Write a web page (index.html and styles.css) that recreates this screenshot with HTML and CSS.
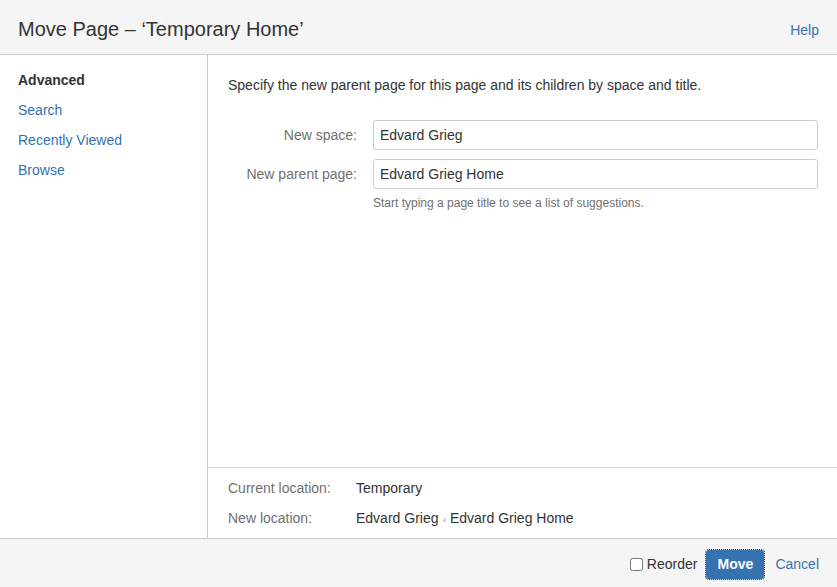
FILE: index.html
```html
<!DOCTYPE html>
<html lang="en">
<head>
  <meta charset="UTF-8">
  <title>Move Page</title>
  <link rel="stylesheet" href="styles.css">
</head>
<body>
  <div class="dialog">
    <!-- Header -->
    <div class="dialog-header">
      <h2>Move Page – ‘Temporary Home’</h2>
      <a href="#" class="help">Help</a>
    </div>

    <div class="dialog-body">
      <!-- Sidebar -->
      <ul class="nav">
        <li class="selected">Advanced</li>
        <li><a href="#">Search</a></li>
        <li><a href="#">Recently Viewed</a></li>
        <li><a href="#">Browse</a></li>
      </ul>

      <!-- Panel -->
      <div class="panel">
        <div class="panel-form">
          <p class="intro">Specify the new parent page for this page and its children by space and title.</p>
          <div class="field">
            <label for="space">New space:</label>
            <input type="text" id="space" value="Edvard Grieg">
          </div>
          <div class="field">
            <label for="parent">New parent page:</label>
            <input type="text" id="parent" value="Edvard Grieg Home">
          </div>
          <div class="hint">Start typing a page title to see a list of suggestions.</div>
        </div>
        <div class="locations">
          <div class="loc-row">
            <span class="loc-label">Current location:</span>
            <span>Temporary</span>
          </div>
          <div class="loc-row">
            <span class="loc-label">New location:</span>
            <span>Edvard Grieg <span class="sep">›</span> Edvard Grieg Home</span>
          </div>
        </div>
      </div>
    </div>

    <!-- Footer -->
    <div class="dialog-footer">
      <label class="reorder"><input type="checkbox">Reorder</label>
      <button class="move-btn">Move</button>
      <a href="#" class="cancel">Cancel</a>
    </div>
  </div>
</body>
</html>
```

FILE: styles.css
```css
body { margin: 0; font-family: "Liberation Sans", Arial, sans-serif; font-size: 14px; color: #333; background: #fff; }
a { color: #3572b0; text-decoration: none; }
.dialog { width: 837px; height: 587px; display: flex; flex-direction: column; }

.dialog-header { height: 55px; background: #f5f5f5; border-bottom: 1px solid #ccc; display: flex; align-items: center; justify-content: space-between; padding: 5px 18px 0; box-sizing: border-box; }
.dialog-header h2 { margin: 0; font-size: 20px; font-weight: normal; color: #333; }
.help { font-size: 14px; }

.dialog-body { flex: 1; display: flex; }
.nav { width: 208px; margin: 0; padding: 15px 0 0 18px; list-style: none; border-right: 1px solid #ccc; box-sizing: border-box; }
.nav li { line-height: 20px; margin-bottom: 10px; }
.nav .selected { font-weight: bold; color: #333; }

.panel { flex: 1; display: flex; flex-direction: column; }
.panel-form { flex: 1; padding: 20px 19px 0 20px; }
.intro { margin: 0 0 25px; line-height: 20px; }
.field { display: flex; align-items: center; margin-bottom: 9px; }
.field label { width: 129px; text-align: right; color: #707070; padding-right: 16px; }
.field input { flex: 1; height: 30px; box-sizing: border-box; border: 1px solid #ccc; border-radius: 3px; padding: 0 6px; font-family: inherit; font-size: 14px; color: #333; }
.hint { margin: -2px 0 0 145px; font-size: 12px; color: #707070; }

.locations { height: 71px; border-top: 1px solid #ddd; padding: 10px 20px 0; box-sizing: border-box; }
.loc-row { display: flex; line-height: 20px; margin-bottom: 10px; }
.loc-label { width: 128px; color: #707070; }
.sep { color: #999; font-size: 11px; }

.dialog-footer { height: 49px; background: #f5f5f5; border-top: 1px solid #ccc; display: flex; align-items: center; justify-content: flex-end; padding: 2px 18px 0 0; box-sizing: border-box; }
.reorder { display: flex; align-items: center; color: #333; }
.reorder input { margin: 0 4px 0 0; width: 13px; height: 13px; }
.move-btn { margin-left: 9px; width: 58px; height: 29px; background: #3572b0; color: #fff; border: none; border-radius: 3px; font-family: inherit; font-size: 14px; font-weight: bold; outline: 1px dotted #333; }
.cancel { margin-left: 11px; }
```
